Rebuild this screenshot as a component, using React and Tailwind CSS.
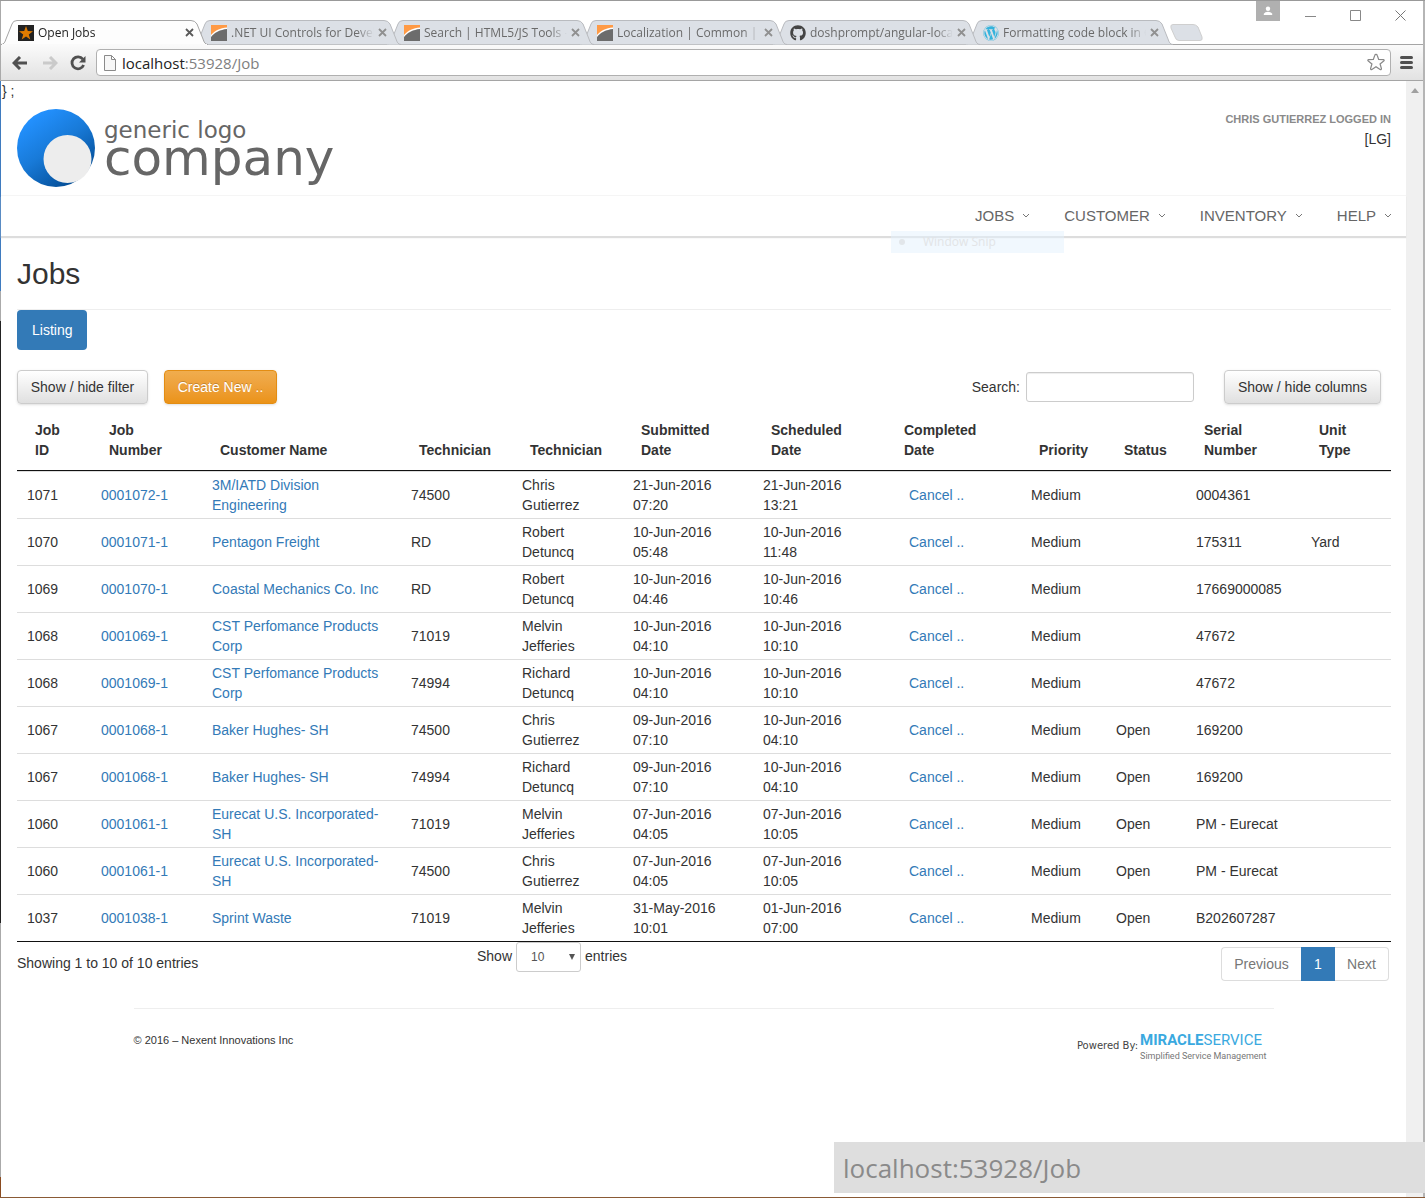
import React from "react";
import { FaGithub, FaWordpress } from "react-icons/fa";

const rows = [
  ["1071", "0001072-1", "3M/IATD Division Engineering", "74500", "Chris Gutierrez", "21-Jun-2016 07:20", "21-Jun-2016 13:21", "", "0004361", ""],
  ["1070", "0001071-1", "Pentagon Freight", "RD", "Robert Detuncq", "10-Jun-2016 05:48", "10-Jun-2016 11:48", "", "175311", "Yard"],
  ["1069", "0001070-1", "Coastal Mechanics Co. Inc", "RD", "Robert Detuncq", "10-Jun-2016 04:46", "10-Jun-2016 10:46", "", "17669000085", ""],
  ["1068", "0001069-1", "CST Perfomance Products Corp", "71019", "Melvin Jefferies", "10-Jun-2016 04:10", "10-Jun-2016 10:10", "", "47672", ""],
  ["1068", "0001069-1", "CST Perfomance Products Corp", "74994", "Richard Detuncq", "10-Jun-2016 04:10", "10-Jun-2016 10:10", "", "47672", ""],
  ["1067", "0001068-1", "Baker Hughes- SH", "74500", "Chris Gutierrez", "09-Jun-2016 07:10", "10-Jun-2016 04:10", "Open", "169200", ""],
  ["1067", "0001068-1", "Baker Hughes- SH", "74994", "Richard Detuncq", "09-Jun-2016 07:10", "10-Jun-2016 04:10", "Open", "169200", ""],
  ["1060", "0001061-1", "Eurecat U.S. Incorporated-SH", "71019", "Melvin Jefferies", "07-Jun-2016 04:05", "07-Jun-2016 10:05", "Open", "PM - Eurecat", ""],
  ["1060", "0001061-1", "Eurecat U.S. Incorporated-SH", "74500", "Chris Gutierrez", "07-Jun-2016 04:05", "07-Jun-2016 10:05", "Open", "PM - Eurecat", ""],
  ["1037", "0001038-1", "Sprint Waste", "71019", "Melvin Jefferies", "31-May-2016 10:01", "01-Jun-2016 07:00", "Open", "B202607287", ""],
];

const columns = [
  ["Job ID", "w-[74px]"],
  ["Job Number", "w-[111px]"],
  ["Customer Name", "w-[199px]"],
  ["Technician", "w-[111px]"],
  ["Technician", "w-[111px]"],
  ["Submitted Date", "w-[130px]"],
  ["Scheduled Date", "w-[133px]"],
  ["Completed Date", "w-[135px]"],
  ["Priority", "w-[85px]"],
  ["Status", "w-[80px]"],
  ["Serial Number", "w-[115px]"],
  ["Unit Type", "w-[90px]"],
];

function StarIcon() {
  return (
    <svg viewBox="0 0 16 16" className="size-4 shrink-0">
      <rect width="16" height="16" fill="#222" />
      <path d="M8 1l1.8 5.1 5.2.1-4.2 3.2 1.5 5.1L8 11.4l-4.300 3.100 1.500-5.100L1 6.200l5.200-.1z" fill="#e07b00" />
    </svg>
  );
}

function SwooshIcon() {
  return (
    <svg viewBox="0 0 16 16" className="size-4 shrink-0">
      <rect width="16" height="16" fill="#fff" />
      <path d="M0 0h16v2.500C9 3.200 4 5.500 0 10z" fill="#ff9a45" />
      <path d="M0 16v-4C4 7 9 4.800 16 4v12z" fill="#6c6c6c" />
    </svg>
  );
}

const tabs = [
  { title: "Open Jobs", icon: <StarIcon />, z: "z-60" },
  { title: ".NET UI Controls for Devel", icon: <SwooshIcon />, z: "z-50" },
  { title: "Search | HTML5/JS Tools -", icon: <SwooshIcon />, z: "z-40" },
  { title: "Localization | Common | H", icon: <SwooshIcon />, z: "z-30" },
  { title: "doshprompt/angular-loca", icon: <FaGithub className="size-4 shrink-0 text-[#444]" />, z: "z-20" },
  { title: "Formatting code block in G", icon: <FaWordpress className="size-4 shrink-0 text-[#35b3dc]" />, z: "z-10" },
];

function Tab({ title, icon, z, active }) {
  return (
    <div className={`relative h-[25px] w-[193px] ${z}`}>
      <svg viewBox="0 0 208 25" className="absolute left-0 top-0 h-[25px] w-[208px]">
        <path
          d="M0 24.500C3 24.500 4 22 5 19L11 4Q12 .500 16 .500H190Q194 .500 196 4L202 19C203 22 204 24.500 207 24.500"
          fill={active ? "#fdfdfd" : "#dce0e6"}
          stroke={active ? "#a5a5a5" : "#b9bbbf"}
        />
        {active && <path d="M1 24.500H206" stroke="#fafafa" />}
      </svg>
      <div className="relative flex h-[25px] items-center pl-[17px]">
        {icon}
        <span className={`ml-1 min-w-0 flex-1 overflow-hidden whitespace-nowrap font-['Open_Sans',sans-serif] text-xs [mask-image:linear-gradient(90deg,#000_88%,transparent)] ${active ? "text-[#222]" : "text-[#6a6a6a]"}`}>
          {title}
        </span>
        <button aria-label="Close tab" className="ml-1 flex size-[9px] items-center">
          <svg viewBox="0 0 9 9" className="size-[9px]"><path d="M1 1l7 7M8 1L1 8" stroke={active ? "#5a5a5a" : "#909090"} strokeWidth="1.800" /></svg>
        </button>
      </div>
    </div>
  );
}

function Browser() {
  return (
    <header>
      <div className="flex h-[43px] items-start justify-between">
        <div className="isolate mt-[19px] flex h-[25px]">
          {tabs.map((t, i) => <Tab key={t.title} {...t} active={i === 0} />)}
          <button aria-label="New tab" className="ml-[11px] mt-1 h-[17px]">
            <svg viewBox="0 0 33 17" className="h-[17px] w-[33px]"><path d="M3 .500H23Q26 .500 28 3L32 13Q33 16.500 30 16.500H9Q6 16.500 5 13L1 4Q0 .500 3 .500z" fill="#dce0e6" stroke="#cfcfcf" /></svg>
          </button>
        </div>
        <div className="flex">
          <button aria-label="Profile" className="flex h-5 w-6 items-center justify-center bg-[#b0b0b0]">
            <svg viewBox="0 0 10 10" className="size-[10px] fill-white"><circle cx="5" cy="2.800" r="2.200" /><path d="M.800 9V7.800Q2 5.800 5 5.800T9.200 7.800V9z" /></svg>
          </button>
          <button aria-label="Minimize" className="ml-2 flex h-7 w-11 items-center justify-center"><svg viewBox="0 0 11 11" className="size-[11px]"><path d="M0 6.500H11" stroke="#888" /></svg></button>
          <button aria-label="Maximize" className="flex h-7 w-[46px] items-center justify-center"><svg viewBox="0 0 11 11" className="size-[11px]"><path d="M.500.500H10.500V10.500H.500z" fill="none" stroke="#888" /></svg></button>
          <button aria-label="Close" className="flex h-7 w-[45px] items-center justify-center"><svg viewBox="0 0 11 11" className="size-[11px]"><path d="M.500.500l10 10M10.500.500l-10 10" stroke="#777" /></svg></button>
        </div>
      </div>
      <div className="flex h-[37px] items-center border-b border-t border-[#a5a5a5] bg-linear-to-b from-[#fafafa] to-[#e2e2e2] pl-[11px] pr-2">
        <button aria-label="Back"><svg viewBox="0 0 16 14" className="h-[14px] w-4"><path d="M8 1L2 7l6 6M2 7H15" fill="none" stroke="#505050" strokeWidth="3" /></svg></button>
        <button aria-label="Forward" className="ml-[14px]"><svg viewBox="0 0 16 14" className="h-[14px] w-4"><path d="M8 1l6 6-6 6M14 7H1" fill="none" stroke="#cacaca" strokeWidth="3" /></svg></button>
        <button aria-label="Reload" className="ml-3"><svg viewBox="0 0 16 16" className="size-4"><path d="M12.800 4.200A6 6 0 1 0 13.600 10" fill="none" stroke="#505050" strokeWidth="2.800" /><path d="M15.500 1v6.500H9z" fill="#505050" /></svg></button>
        <div className="ml-[10px] flex h-[27px] flex-1 items-center rounded-sm border border-[#b0b0b0] bg-white pl-[7px] pr-2">
          <svg viewBox="0 0 12 16" className="h-4 w-3"><path d="M.500.500H7.500L11.500 4.500V15.500H.500zM7.500.500V4.500H11.500" fill="#f7f7f7" stroke="#8a8a8a" /></svg>
          <div className="ml-[6px] flex-1 font-['Open_Sans',sans-serif] text-[15px] text-[#808080]"><span className="text-[#222]">localhost</span>:53928/Job</div>
          <svg viewBox="0 0 20 20" className="-mr-1 h-[19px] w-5"><path d="M10 1.500q1 0 1.300 1l1.500 4.300 5 .1q1.500.5.300 1.600l-3.800 3 1.400 4.900q0 1.600-1.400 1L10 14.500l-4.300 2.900q-1.400.6-1.400-1l1.400-4.900-3.800-3q-1.200-1.100.3-1.600l5-.1L8.700 2.500q.3-1 1.300-1z" fill="#fff" stroke="#888" strokeWidth="1.300" /></svg>
        </div>
        <button aria-label="Menu" className="ml-[9px] mr-[2px] flex w-[13px] flex-col gap-[2px]">
          <span className="h-[3px] rounded-sm bg-[#505050]" /><span className="h-[3px] rounded-sm bg-[#505050]" /><span className="h-[3px] rounded-sm bg-[#505050]" />
        </button>
      </div>
    </header>
  );
}

function Logo() {
  return (
    <a href="#home" className="flex items-start font-['DejaVu_Sans',sans-serif] text-[#666]">
      <svg viewBox="0 0 78 78" className="size-[78px]">
        <defs>
          <linearGradient id="ring" x1="0.200" y1="0.100" x2="0.800" y2="0.950">
            <stop offset="0" stopColor="#2391ff" />
            <stop offset="0.450" stopColor="#187ad8" />
            <stop offset="1" stopColor="#024a91" />
          </linearGradient>
        </defs>
        <circle cx="39" cy="39" r="39" fill="url(#ring)" />
        <circle cx="50.500" cy="50" r="24" fill="#ededed" />
      </svg>
      <span className="ml-[9px] mt-[9px] flex flex-col">
        <span className="text-[23px] leading-6">generic logo</span>
        <span className="text-[50px] leading-8">company</span>
      </span>
    </a>
  );
}

const grayButton = "h-[34px] rounded-sm border border-[#ccc] bg-linear-to-b from-white to-[#e0e0e0] shadow-sm";

export default function App() {
  return (
    <div className="relative flex min-h-screen flex-col border-b border-t border-b-[#8a5a35] border-t-[#999] bg-white font-['Liberation_Sans',Arial,sans-serif] text-sm leading-5 text-[#333]">
      <div className="flex flex-1">
        <div className="w-px bg-[linear-gradient(#aaa_80px,#3f7bbf_80px_290px,#aaa_290px_320px,#222_320px_922px,#aaa_922px_1176px,#8a4b20_1176px)]" />
        <div className="flex min-w-0 flex-1 flex-col">
          <Browser />
          <div className="flex flex-1">
            <main className="min-w-0 flex-1">
              <div className="pl-px">{"} ;"}</div>
              <div className="flex justify-between pb-2 pl-4 pr-[15px] pt-2">
                <Logo />
                <div className="text-right">
                  <div className="text-[11px] font-bold uppercase text-[#8a8a8a]">Chris Gutierrez logged in</div>
                  <div>[LG]</div>
                </div>
              </div>
              <nav className="relative flex h-[41px] items-center justify-end gap-[34px] border-t border-[#f5f5f5] pr-[14px] text-[15px] text-[#666] shadow-[0_2px_1px_#ddd]">
                {["JOBS", "CUSTOMER", "INVENTORY", "HELP"].map((m) => (
                  <a key={m} href={`#${m.toLowerCase()}`} className="flex items-center gap-2">
                    {m}
                    <svg viewBox="0 0 8 6" className="h-[6px] w-2"><path d="M1 1l3 3 3-3" fill="none" stroke="#777" /></svg>
                  </a>
                ))}
                <div className="absolute right-[342px] top-[35px] flex h-[22px] w-[173px] items-center bg-[#e3f2fd]/50 pl-2 font-['Open_Sans',sans-serif] text-xs text-[#e2e4e6]">
                  <span className="size-[6px] rounded-full bg-[#e2e6ea]" />
                  <span className="ml-[18px]">Window Snip</span>
                </div>
              </nav>
              <section className="pl-4 pr-[15px]">
                <h2 className="border-b border-[#eee] pb-[19px] pt-[21px] text-[30px] leading-[33px]">Jobs</h2>
                <button className="h-10 rounded-sm bg-[#337ab7] px-[15px] text-white">Listing</button>
                <div className="mt-5 flex items-center">
                  <button className={`w-[131px] ${grayButton}`}>Show / hide filter</button>
                  <button className="ml-4 h-[34px] w-[113px] rounded-sm border border-[#e38d13] bg-linear-to-b from-[#f0ad4e] to-[#eb9316] text-white shadow-sm [text-shadow:0_-1px_0_rgba(0,0,0,.2)]">Create New ..</button>
                  <label htmlFor="search" className="ml-auto">Search:</label>
                  <input id="search" type="text" className="ml-[6px] h-[30px] w-[168px] rounded-[3px] border border-[#ccc] px-2 shadow-[inset_0_1px_1px_rgba(0,0,0,.075)]" />
                  <button className={`ml-[30px] mr-[10px] w-[157px] ${grayButton}`}>Show / hide columns</button>
                </div>
                <table className="mt-[6px] w-full table-fixed border-separate border-spacing-0 border-b border-[#111]">
                  <thead>
                    <tr>
                      {columns.map(([name, width], i) => (
                        <th key={i} className={`${width} border-b border-[#111] py-[10px] pl-[18px] pr-[18px] text-left align-bottom font-bold`}>
                          {name}
                        </th>
                      ))}
                    </tr>
                  </thead>
                  <tbody className="[&_td]:h-[47px] [&_td]:border-t [&_td]:border-[#ddd] [&_td]:px-[10px] [&_td]:py-[3px]">
                    {rows.map((r, i) => (
                      <tr key={i}>
                        <td>{r[0]}</td>
                        <td><a href="#job" className="text-[#337ab7]">{r[1]}</a></td>
                        <td><a href="#customer" className="text-[#337ab7]">{r[2]}</a></td>
                        <td>{r[3]}</td>
                        <td><div className="w-[70px]">{r[4]}</div></td>
                        <td>{r[5]}</td>
                        <td>{r[6]}</td>
                        <td><a href="#cancel" className="px-[13px] text-[#337ab7]">Cancel ..</a></td>
                        <td>Medium</td>
                        <td>{r[7]}</td>
                        <td>{r[8]}</td>
                        <td>{r[9]}</td>
                      </tr>
                    ))}
                  </tbody>
                </table>
                <div className="flex items-start">
                  <div className="w-1/3 pt-[11px]">Showing 1 to 10 of 10 entries</div>
                  <label className="flex flex-1 items-start gap-1 pl-[2px]">
                    <span className="pt-1">Show</span>
                    <span className="relative">
                      <select className="h-[30px] w-[65px] appearance-none rounded-[3px] border border-[#ccc] bg-white pl-[14px] text-xs text-[#555]">
                        <option>10</option>
                        <option>25</option>
                        <option>50</option>
                      </select>
                      <svg viewBox="0 0 6 6" className="pointer-events-none absolute right-[6px] top-3 size-[6px]"><path d="M0 0H6L3 6z" fill="#555" /></svg>
                    </span>
                    <span className="pt-1">entries</span>
                  </label>
                  <nav className="mr-[2px] mt-[5px] flex h-[34px] text-[#777]">
                    <button className="w-20 rounded-l-sm border border-r-0 border-[#ddd]">Previous</button>
                    <button className="w-[34px] bg-[#337ab7] text-white">1</button>
                    <button className="w-[54px] rounded-r-sm border border-l-0 border-[#ddd]">Next</button>
                  </nav>
                </div>
              </section>
              <footer className="mx-auto mt-[27px] flex max-w-[1140px] justify-between border-t border-[#eee] pr-[7px] pt-[21px]">
                <div className="text-[11px]">© 2016 – Nexent Innovations Inc</div>
                <div className="flex">
                  <span className="mt-[6px] font-['DejaVu_Sans',sans-serif] text-[10px] text-[#444]">Powered By:</span>
                  <div className="ml-[2px] font-['Roboto',sans-serif]">
                    <div className="text-[15px] text-[#3aa9e0]"><b>MIRACLE</b>SERVICE</div>
                    <div className="text-[9px] leading-3 text-[#777]">Simplified Service Management</div>
                  </div>
                </div>
              </footer>
            </main>
            <div className="w-[17px] bg-[#f0f0f0] pt-[7px]">
              <svg viewBox="0 0 8 5" className="mx-auto h-[5px] w-2"><path d="M0 5L4 0l4 5z" fill="#a0a0a0" /></svg>
            </div>
          </div>
        </div>
        <div className="w-[2px] bg-[#b5b5b5]" />
      </div>
      <div className="absolute bottom-1 right-0 flex h-[51px] w-[591px] items-center bg-[#dedede] pl-[9px] font-['Open_Sans',sans-serif] text-[26px] text-[#8a8a8a]">
        localhost:53928/Job
      </div>
    </div>
  );
}
